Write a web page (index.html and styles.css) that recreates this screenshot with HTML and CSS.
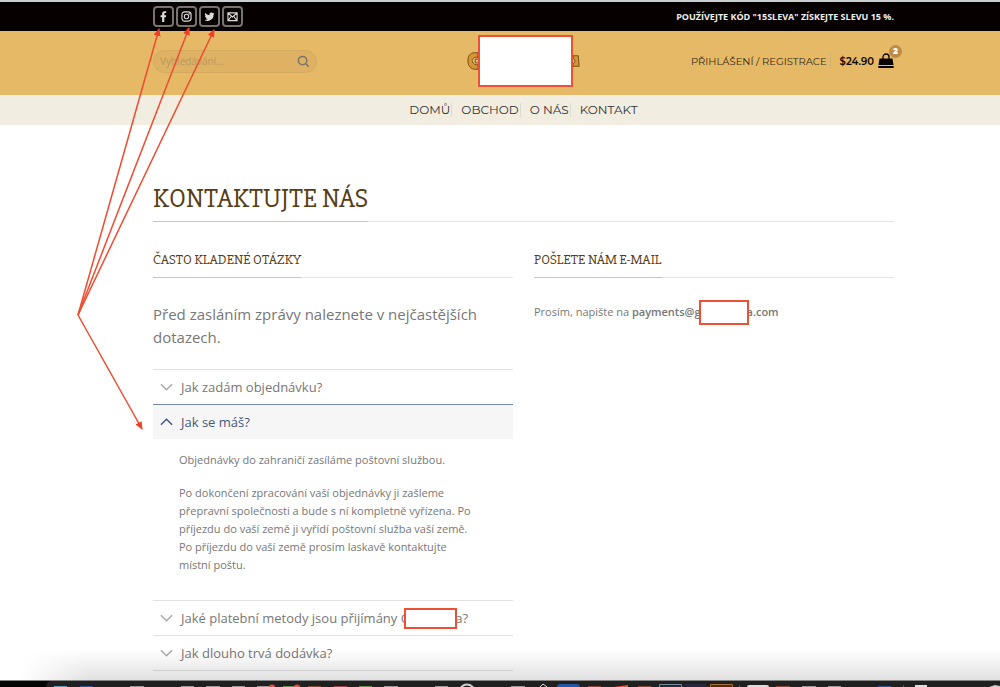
FILE: index.html
```html
<!DOCTYPE html>
<html lang="cs">
<head>
<meta charset="utf-8">
<meta name="viewport" content="width=device-width, initial-scale=1">
<title>Kontaktujte nás</title>
<link rel="stylesheet" href="styles.css">
</head>
<body>
<header>
  <div class="topbar shell">
    <nav class="social" aria-label="Sociální sítě">
      <a href="#" aria-label="Facebook"><svg viewBox="0 0 12 12"><path d="M4.5 12V6.7H2.8V4.6h1.7V3.1C4.500 1.300 5.500.3 7.200.3h1.700v2H7.800c-.7 0-.9.4-.9 1v1.300h2L8.600 6.700H6.900V12z"/></svg></a>
      <a href="#" aria-label="Instagram"><svg class="line" viewBox="0 0 12 12"><rect x="1" y="1" width="10" height="10" rx="3"/><circle cx="6" cy="6" r="2.400"/><circle cx="8.900" cy="3.100" r=".3"/></svg></a>
      <a href="#" aria-label="Twitter"><svg viewBox="0 0 24 24"><path d="M23 5.500a9 9 0 0 1-2.600.7 4.500 4.500 0 0 0 2-2.500 9 9 0 0 1-2.900 1.100A4.500 4.500 0 0 0 11.800 9 12.900 12.900 0 0 1 2.500 4.200a4.500 4.500 0 0 0 1.400 6.100 4.500 4.500 0 0 1-2.100-.6c0 2.200 1.500 4.100 3.700 4.500a4.500 4.500 0 0 1-2.100.1 4.500 4.500 0 0 0 4.300 3.200A9.100 9.100 0 0 1 1 19.400 12.900 12.900 0 0 0 20.800 8a9 9 0 0 0 2.200-2.500z"/></svg></a>
      <a href="#" aria-label="E-mail"><svg class="line" viewBox="0 0 12 12"><path d="M1 2h10v8.500H1zM1.500 2.500 6 6.500l4.500-4M1.500 10l3-4M10.500 10l-3-4"/></svg></a>
    </nav>
    <strong class="promo">POUŽÍVEJTE KÓD "15SLEVA" ZÍSKEJTE SLEVU 15 %.</strong>
  </div>
  <div class="masthead shell">
    <form class="search" role="search">
      <input type="search" placeholder="Vyhledávání..." aria-label="Vyhledávání">
      <button type="button" aria-label="Hledat"><svg viewBox="0 0 14 14"><circle cx="6" cy="6" r="4.500"/><path d="m9.500 9.500 3 3"/></svg></button>
    </form>
    <div class="logo">
      <svg class="logo-left" viewBox="0 0 12 20"><path d="M12 1H8C3 1 1 5 1 10s3 9 8 9h3z"/><path class="ring" d="M12 6H9c-3 1-4 3-3 5s3 4 6 3M12 8H9v4h3"/></svg>
      <span class="logo-cover"></span>
      <svg class="logo-right" viewBox="0 0 8 16"><path d="M0 2h6l1 12H0z"/><path class="ring" d="M0 5c3 1 3 5 0 6"/></svg>
    </div>
    <div class="account">
      <a href="#">PŘIHLÁŠENÍ / REGISTRACE</a>
      <a class="cart" href="#"><span>$24.90</span><span class="bag"><svg viewBox="0 0 16 16"><path d="M1.500 5.500h13l1 6.500H.5zM.3 13h15.400v2H.3z"/><path class="handle" d="M5 7V4a3 3 0 0 1 6 0v3"/></svg><b class="badge">2</b></span></a>
    </div>
  </div>
  <nav class="menu shell" aria-label="Hlavní menu">
    <a href="#">DOMŮ</a><a href="#">OBCHOD</a><a href="#">O NÁS</a><a href="#">KONTAKT</a>
  </nav>
</header>

<main class="content">
  <h1 class="title title-large"><span>KONTAKTUJTE NÁS</span></h1>
  <div class="columns">
    <section>
      <h2 class="title"><span>ČASTO KLADENÉ OTÁZKY</span></h2>
      <p class="lead">Před zasláním zprávy naleznete v nejčastějších dotazech.</p>
      <div class="accordion">
        <button class="question" type="button" aria-expanded="false"><svg viewBox="0 0 14 8"><path d="m1 1 6 6 6-6"/></svg><span>Jak zadám objednávku?</span></button>
        <button class="question open" type="button" aria-expanded="true" aria-controls="answer"><svg viewBox="0 0 14 8"><path d="m1 7 6-6 6 6"/></svg><span>Jak se máš?</span></button>
        <div class="answer" id="answer">
          <p>Objednávky do zahraničí zasíláme poštovní službou.</p>
          <p>Po dokončení zpracování vaší objednávky ji zašleme přepravní společnosti a bude s ní kompletně vyřízena. Po příjezdu do vaší země ji vyřídí poštovní služba vaší země. Po příjezdu do vaší země prosím laskavě kontaktujte místní poštu.</p>
        </div>
        <button class="question" type="button" aria-expanded="false"><svg viewBox="0 0 14 8"><path d="m1 1 6 6 6-6"/></svg><span>Jaké platební metody jsou přijímány G<i class="cover cover-low"></i>a?</span></button>
        <button class="question" type="button" aria-expanded="false"><svg viewBox="0 0 14 8"><path d="m1 1 6 6 6-6"/></svg><span>Jak dlouho trvá dodávka?</span></button>
      </div>
    </section>
    <section>
      <h2 class="title"><span>POŠLETE NÁM E-MAIL</span></h2>
      <p class="mail">Prosím, napište na <strong>payments@g<i class="cover"></i>a.com</strong></p>
    </section>
  </div>
</main>

<svg class="arrows" viewBox="0 0 1000 687" aria-hidden="true">
  <defs><marker id="tip" viewBox="0 0 8 8" refX="7" refY="4" markerWidth="8" markerHeight="8" markerUnits="userSpaceOnUse" orient="auto"><path d="M0 .5 8 4 0 7.500z"/></marker></defs>
  <path class="ray" d="M78 315 159 29"/><path class="ray" d="M78 315 189 28"/><path class="ray" d="M78 315 214 30"/><path class="ray" d="M78 315 142 429"/>
</svg>

<div class="dock" aria-hidden="true">
  <svg viewBox="0 0 1000 7">
    <rect width="1000" height="7" fill="#050505"/><path d="M46 7q0-6 6-6h948v6z" fill="#202020"/><path d="M0 .5h1000" stroke="#858585"/>
    <g fill="#999"><path d="M130 6h14v1h-14zM181 6h13v1h-13zM206 6h14v1h-14zM232 6h13v1h-13zM257 6h13v1h-13zM384 6h14v1h-14zM435 6h13v1h-13zM511 6h14v1h-14zM802 6h14v1h-14zM828 6h13v1h-13z"/></g>
    <path d="M54 6h13v1H54z" fill="#53a1c2"/><path d="M80 6h13v1H80zM878 6h13v1h-13z" fill="#2651a1"/>
    <path d="M283 6h12v1h-12zM359 6h13v1h-13z" fill="#559a47"/><path d="M308 6h13v1h-13zM588 6h13v1h-13zM638 6h13v1h-13zM776 6h14v1h-14z" fill="#8f432d"/><path d="M334 6h13v1h-13z" fill="#a6364c"/>
    <circle cx="272" cy="8" r="3.500" fill="#ed4b3e"/><circle cx="297" cy="8" r="3.500" fill="#ed4b3e"/>
    <circle cx="467" cy="12" r="7.500" fill="none" stroke="#ccc" stroke-width="2"/><path d="m540 7 3-3 4 3" fill="none" stroke="#ddd"/>
    <path d="M557 7q0-3 3-3h17q3 0 3 3z" fill="#2257a5"/><path d="m614 7 14-2v2z" fill="#f25426"/>
    <path d="M659.500 7V4.500h22V7" fill="#202b35" stroke="#778c9b"/><path d="M685 4h21v3h-21z" fill="#292641"/><path d="M710.500 7V4.500h22V7" fill="#43301a" stroke="#aa6d2a"/>
    <path d="M747 7q0-2 2-2h18q2 0 2 2zM915 5h12v2h-12z" fill="#ddd"/><path d="M739.500 5v2M903.500 5v2" stroke="#555"/><path d="m989 7 6-2 5 1v1z" fill="#ccc"/>
  </svg>
</div>
</body>
</html>
```
FILE: styles.css
```css
* { box-sizing: border-box; }
body {
  margin: 0;
  min-height: 100vh;
  position: relative;
  overflow: hidden;
  background: #fff;
  color: #777;
  font-family: "Open Sans", sans-serif;
  font-size: 11px;
}
a { color: inherit; text-decoration: none; }
button, input { font: inherit; color: inherit; }
h1, h2, p { margin: 0; }
svg { display: block; }

.shell { padding-left: 153px; padding-right: 106px; }
.topbar {
  display: flex;
  align-items: center;
  justify-content: space-between;
  height: 31px;
  border-top: 2px solid #c9ced0;
  background: #060000;
}
.social { display: flex; gap: 2px; }
.social a {
  display: grid;
  place-items: center;
  width: 21px;
  height: 21px;
  border: 2px solid #777371;
  border-radius: 4px;
}
.social svg { width: 11px; height: 11px; fill: #ddd; }
.social .line { fill: none; stroke: #ddd; stroke-width: 1.2; }
.promo { color: #eee; font-size: 9px; font-weight: 700; }

.masthead {
  display: grid;
  grid-template-columns: 1fr 114px 1fr;
  align-items: center;
  height: 64px;
  padding-bottom: 4px;
  background: #e6b966;
}
.search {
  display: flex;
  align-items: center;
  width: 164px;
  height: 23px;
  padding: 0 6px;
  border: 1px solid #d3aa60;
  border-radius: 12px;
  background: #dfb163;
}
.search input { flex: 1; min-width: 0; padding: 0; border: 0; outline: 0; background: none; font-size: 10px; }
.search input::placeholder { color: #b99860; opacity: 1; }
.search button { padding: 0; border: 0; background: none; }
.search button svg { width: 13px; height: 13px; fill: none; stroke: #7b746a; stroke-width: 1.6; }
.logo { display: flex; align-items: center; }
.logo svg { fill: #d79630; stroke: #674819; stroke-width: 1; }
.logo .ring { fill: #e6bd77; }
.logo-left { width: 11px; height: 20px; }
.logo-right { width: 7px; height: 16px; }
.logo-cover { width: 95px; height: 52px; flex: none; border: 2px solid #ed5035; background: #fff; }
.account {
  display: flex;
  align-items: center;
  justify-content: flex-end;
  font-family: Montserrat, Inter, sans-serif;
  font-size: 10px;
  color: #352b1b;
}
.cart { display: flex; align-items: center; gap: 4px; margin-left: 3px; padding-left: 9px; border-left: 1px solid #d5b071; color: #0c0802; font-weight: 600; }
.bag { position: relative; }
.bag svg { width: 16px; height: 16px; fill: #080500; }
.bag .handle { fill: none; stroke: #080500; stroke-width: 1.3; }
.badge {
  position: absolute;
  top: -8px;
  right: -8px;
  width: 13px;
  height: 13px;
  border-radius: 50%;
  background: #bd8b45;
  color: #fff;
  font-size: 8px;
  line-height: 13px;
  text-align: center;
}
.menu {
  display: flex;
  align-items: center;
  justify-content: center;
  height: 30px;
  background: #f1ede1;
  color: #333;
  font-family: Montserrat, Inter, sans-serif;
  font-size: 12px;
}
.menu a { line-height: 14px; padding: 0 1px 0 9px; border-right: 1px solid #dedbd0; }
.menu a:first-child { padding-left: 0; }
.menu a:last-child { padding-right: 0; border: 0; }

.content { padding: 52px 106px 15px 153px; }
.title {
  display: flex;
  border-bottom: 1px solid #e5e5e5;
  color: #583c12;
  font-family: "Slabo 27px", "Slabo 13px", Kreon, "Bree Serif", "DejaVu Serif Condensed", serif;
  font-size: 14px;
  font-weight: 400;
  line-height: 34px;
}
.title span { margin-bottom: -1px; border-bottom: 1px solid #c5c5c5; }
.title-large { font-size: 27px; line-height: 44px; }
.columns { display: grid; grid-template-columns: 1fr 1fr; gap: 21px; margin-top: 21px; }
.lead { margin: 25px 0 20px; font-size: 15px; line-height: 23px; }
.accordion { border-bottom: 1px solid #e2e2e2; }
.question {
  display: flex;
  align-items: center;
  gap: 8px;
  width: 100%;
  height: 35px;
  padding: 0 7px;
  border: 0;
  border-top: 1px solid #e2e2e2;
  background: none;
  color: #777;
  font-size: 13px;
  text-align: left;
}
.question svg { width: 13px; height: 8px; fill: none; stroke: #aaa; stroke-width: 1.6; }
.question.open { border-color: #768baa; background: #f6f6f6; color: #445a80; font-weight: 500; }
.question.open svg { stroke: #445a80; }
.answer { padding: 12px 33px 26px 26px; line-height: 18px; }
.answer p + p { margin-top: 15px; }
.mail { margin-top: 25px; line-height: 18px; }
.mail strong { font-weight: 600; }
.cover {
  display: inline-block;
  position: relative;
  width: 50px;
  height: 25px;
  margin: -6px -2px -4px;
  border: 2px solid #ed5035;
  background: #fff;
  vertical-align: middle;
}
.cover-low { width: 53px; height: 21px; margin-left: -6px; }

.arrows { position: absolute; top: 0; left: 0; width: 1000px; height: 687px; pointer-events: none; }
.arrows .ray { fill: none; stroke: #ee4b30; stroke-width: 1.5; marker-end: url(#tip); }
.arrows marker path { fill: #ee4027; }
.dock { position: fixed; left: 0; right: 0; bottom: 0; }
.dock::before {
  content: "";
  display: block;
  height: 30px;
  background: linear-gradient(#0000, #0000001f);
  mask-image: linear-gradient(90deg, transparent 20px, #000 90px);
}
.dock svg { width: 100%; height: 7px; }
```
